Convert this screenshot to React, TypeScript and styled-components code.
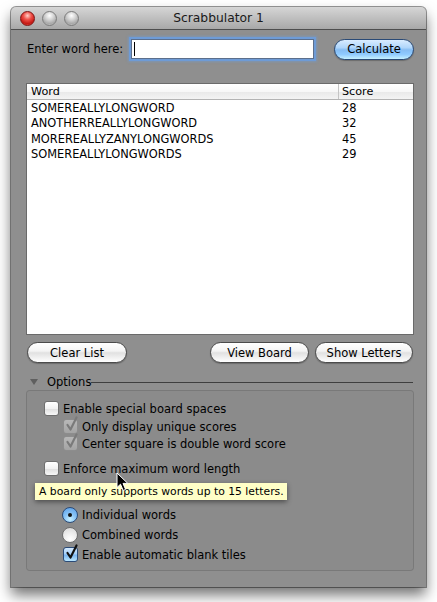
import React from 'react';
import styled, { createGlobalStyle } from 'styled-components';

const Global = createGlobalStyle`
  html, body { margin: 0; padding: 0; background: #ffffff; }
  body {
    font-family: "DejaVu Sans", "Noto Sans", sans-serif;
    width: 437px;
    height: 602px;
    overflow: hidden;
    color: #000;
  }
`;

const Page = styled.div`
  padding: 7px 0 0 11px;
`;

const Window = styled.div`
  position: relative;
  width: 415px;
  height: 580px;
  background: #8f8f8f;
  border-radius: 5px 5px 0 0;
  box-shadow: 0 0 0 1px rgba(0, 0, 0, 0.4), 0 8px 14px rgba(0, 0, 0, 0.55);
  display: flex;
  flex-direction: column;
`;

const TitleBar = styled.div`
  height: 22px;
  background: linear-gradient(#d6d6d6, #a8a8a8);
  border-bottom: 1px solid #4e4e4e;
  border-radius: 5px 5px 0 0;
  display: grid;
  grid-template-columns: 1fr auto 1fr;
  align-items: center;
`;

const Lights = styled.div`
  display: flex;
  gap: 7px;
  padding-left: 9px;
`;

const Light = styled.div<{ $red?: boolean }>`
  width: 13px;
  height: 13px;
  border-radius: 50%;
  border: 1px solid ${(p) => (p.$red ? '#7e1313' : '#7c7c7c')};
  background: ${(p) =>
    p.$red
      ? 'radial-gradient(circle at 50% 28%, #ffd0c8 0%, #f0524a 35%, #c51a16 70%, #ff5a4c 100%)'
      : 'radial-gradient(circle at 50% 28%, #ffffff 0%, #d6d6d6 35%, #a9a9a9 70%, #d8d8d8 100%)'};
`;

const Title = styled.div`
  font-size: 12.3px;
  color: #1a1a1a;
`;

const Content = styled.div`
  flex: 1;
  display: flex;
  flex-direction: column;
  padding: 0 12px 0 15px;
`;

const EntryRow = styled.div`
  margin-top: 8px;
  height: 22px;
  display: grid;
  grid-template-columns: 103px 187px 18px 80px;
  align-items: center;
`;

const Label = styled.label`
  font-size: 11.5px;
  padding-left: 1px;
`;

const Field = styled.div`
  height: 18px;
  margin: 0 2px;
  background: #fff;
  border: 1px solid #5c6f8c;
  box-shadow: 0 0 0 2px #6e9bd6, 0 0 2px 3px rgba(110, 155, 214, 0.5);
  display: flex;
  align-items: center;
  padding-left: 2px;
`;

const Caret = styled.div`
  width: 1px;
  height: 14px;
  background: #000;
`;

const AquaButton = styled.button<{ $blue?: boolean; $w: number }>`
  width: ${(p) => p.$w}px;
  height: 21px;
  padding: 0;
  border-radius: 11px;
  border: 1px solid ${(p) => (p.$blue ? '#2a4a76' : '#4b4b4b')};
  background: ${(p) =>
    p.$blue
      ? 'linear-gradient(#d9ecff 0%, #b0d6fb 40%, #86bdf3 52%, #8fcaff 75%, #c6f1ff 100%)'
      : 'linear-gradient(#ffffff 0%, #f4f4f4 42%, #e1e1e1 52%, #f2f2f2 80%, #ffffff 100%)'};
  box-shadow: 0 1px 1px rgba(0, 0, 0, 0.25);
  font-family: "DejaVu Sans", sans-serif;
  font-size: 11.5px;
  color: #000;
  display: flex;
  align-items: center;
  justify-content: center;
`;

const Table = styled.div`
  margin-top: 23px;
  height: 250px;
  background: #fff;
  border: 1px solid #6a6a6a;
  display: flex;
  flex-direction: column;
`;

const HeaderRow = styled.div`
  height: 15px;
  display: grid;
  grid-template-columns: 311px 1fr;
  background: linear-gradient(#ffffff 0%, #f7f7f7 50%, #e8e8e8 51%, #f3f3f3 100%);
  border-bottom: 1px solid #b3b3b3;
`;

const HeaderCell = styled.div<{ $divider?: boolean }>`
  font-size: 11.2px;
  line-height: 15px;
  padding-left: ${(p) => (p.$divider ? '3px' : '4px')};
  border-left: ${(p) => (p.$divider ? '1px solid #c4c4c4' : 'none')};
`;

const DataRow = styled.div`
  height: 15.5px;
  display: grid;
  grid-template-columns: 311px 1fr;
  align-items: center;
`;

const Cell = styled.div`
  font-size: 11.4px;
  padding-left: 4px;
`;

const ButtonRow = styled.div`
  margin-top: 7px;
  display: flex;
  gap: 6px;
  padding: 0 1px;
`;

const Spacer = styled.div`
  flex: 1;
`;

const OptionsHeader = styled.div`
  margin-top: 11px;
  height: 16px;
  display: flex;
  align-items: center;
  padding-left: 4px;
`;

const Triangle = styled.div`
  width: 0;
  height: 0;
  border-left: 4px solid transparent;
  border-right: 4px solid transparent;
  border-top: 6px solid #5f5f5f;
  margin-right: 9px;
`;

const OptionsLabel = styled.span`
  font-size: 11.5px;
`;

const Rule = styled.div`
  flex: 1;
  height: 1px;
  background: #3e3e3e;
  margin-right: 1px;
`;

const GroupBox = styled.div`
  margin-top: 0;
  height: 181px;
  border: 1px solid rgba(0, 0, 0, 0.13);
  border-radius: 4px;
  background: rgba(0, 0, 0, 0.025);
  padding: 9px 0 0 17px;
  box-sizing: border-box;
  display: flex;
  flex-direction: column;
`;

const OptionRow = styled.div<{ $indent?: number; $h?: number; $mt?: number }>`
  display: flex;
  align-items: center;
  gap: 4px;
  height: ${(p) => p.$h ?? 17}px;
  margin-top: ${(p) => p.$mt ?? 0}px;
  padding-left: ${(p) => p.$indent ?? 0}px;
  font-size: 11.5px;
  color: #000;
`;

const Box = styled.div<{ $kind: 'off' | 'dim' | 'blue' }>`
  position: relative;
  width: 13px;
  height: 13px;
  border-radius: 3px;
  flex: none;
  border: 1px solid
    ${(p) => (p.$kind === 'blue' ? '#2b4b78' : p.$kind === 'dim' ? '#8d8d8d' : '#6f6f6f')};
  background: ${(p) =>
    p.$kind === 'blue'
      ? 'linear-gradient(#d4eaff 0%, #a6d0fa 45%, #7cb7f1 55%, #b8e6ff 100%)'
      : p.$kind === 'dim'
      ? 'linear-gradient(#b8b8b8, #a4a4a4)'
      : 'linear-gradient(#ffffff 0%, #f1f1f1 50%, #e0e0e0 55%, #f7f7f7 100%)'};
  svg {
    position: absolute;
    left: 1px;
    top: -4px;
  }
`;

const Radio = styled.div<{ $on?: boolean }>`
  width: 14px;
  height: 14px;
  border-radius: 50%;
  flex: none;
  border: 1px solid ${(p) => (p.$on ? '#2b4b78' : '#6f6f6f')};
  background: ${(p) =>
    p.$on
      ? 'radial-gradient(circle at 50% 80%, #c8f0ff 0%, #86c2f6 45%, #5a9ee6 100%)'
      : 'radial-gradient(circle at 50% 80%, #ffffff 0%, #ececec 50%, #d6d6d6 100%)'};
  display: flex;
  align-items: center;
  justify-content: center;
  &::after {
    content: '';
    display: ${(p) => (p.$on ? 'block' : 'none')};
    width: 4px;
    height: 4px;
    border-radius: 50%;
    background: #111;
  }
`;

const Tooltip = styled.div`
  position: absolute;
  left: 24px;
  top: 476px;
  width: 252px;
  height: 17px;
  box-sizing: border-box;
  background: #ffffc7;
  box-shadow: 0 2px 5px rgba(0, 0, 0, 0.45);
  font-size: 10.8px;
  line-height: 17px;
  padding-left: 4px;
  color: #000;
  white-space: nowrap;
`;

const Cursor = styled.svg`
  position: absolute;
  left: 105px;
  top: 465px;
`;

const Check = ({ color }: { color: string }) => (
  <svg width="14" height="16" viewBox="0 0 14 16">
    <path d="M2.5 9 L5.5 13.5 L11.5 1.5" fill="none" stroke={color} strokeWidth="2.2" strokeLinecap="round" strokeLinejoin="round" />
  </svg>
);

const words: [string, number][] = [
  ['SOMEREALLYLONGWORD', 28],
  ['ANOTHERREALLYLONGWORD', 32],
  ['MOREREALLYZANYLONGWORDS', 45],
  ['SOMEREALLYLONGWORDS', 29],
];

export default function App() {
  return (
    <Page>
      <Global />
      <Window>
        <TitleBar>
          <Lights>
            <Light $red />
            <Light />
            <Light />
          </Lights>
          <Title>Scrabbulator 1</Title>
          <div />
        </TitleBar>
        <Content>
          <EntryRow>
            <Label>Enter word here:</Label>
            <Field>
              <Caret />
            </Field>
            <div />
            <AquaButton $blue $w={80}>Calculate</AquaButton>
          </EntryRow>
          <Table>
            <HeaderRow>
              <HeaderCell>Word</HeaderCell>
              <HeaderCell $divider>Score</HeaderCell>
            </HeaderRow>
            {words.map(([w, s]) => (
              <DataRow key={w}>
                <Cell>{w}</Cell>
                <Cell>{s}</Cell>
              </DataRow>
            ))}
          </Table>
          <ButtonRow>
            <AquaButton $w={100}>Clear List</AquaButton>
            <Spacer />
            <AquaButton $w={99}>View Board</AquaButton>
            <AquaButton $w={98}>Show Letters</AquaButton>
          </ButtonRow>
          <OptionsHeader>
            <Triangle />
            <OptionsLabel>Options</OptionsLabel>
            <Rule />
          </OptionsHeader>
          <GroupBox>
            <OptionRow>
              <Box $kind="off" />
              Enable special board spaces
            </OptionRow>
            <OptionRow $indent={19} $mt={1}>
              <Box $kind="dim"><Check color="#7a7a7a" /></Box>
              Only display unique scores
            </OptionRow>
            <OptionRow $indent={19}>
              <Box $kind="dim"><Check color="#7a7a7a" /></Box>
              Center square is double word score
            </OptionRow>
            <OptionRow $mt={8}>
              <Box $kind="off" />
              Enforce maximum word length
            </OptionRow>
            <OptionRow $h={28} />
            <OptionRow $indent={18} $h={20}>
              <Radio $on />
              Individual words
            </OptionRow>
            <OptionRow $indent={18} $h={20}>
              <Radio />
              Combined words
            </OptionRow>
            <OptionRow $indent={19} $h={19}>
              <Box $kind="blue"><Check color="#111" /></Box>
              Enable automatic blank tiles
            </OptionRow>
          </GroupBox>
        </Content>
        <Tooltip>A board only supports words up to 15 letters.</Tooltip>
        <Cursor width="13" height="20" viewBox="0 0 13 20">
          <path d="M1 1 L1 15.5 L4.5 12.2 L7.2 18.5 L9.6 17.4 L7 11.4 L11.8 11.4 Z" fill="#000" stroke="#fff" strokeWidth="1" strokeLinejoin="round" />
        </Cursor>
      </Window>
    </Page>
  );
}
